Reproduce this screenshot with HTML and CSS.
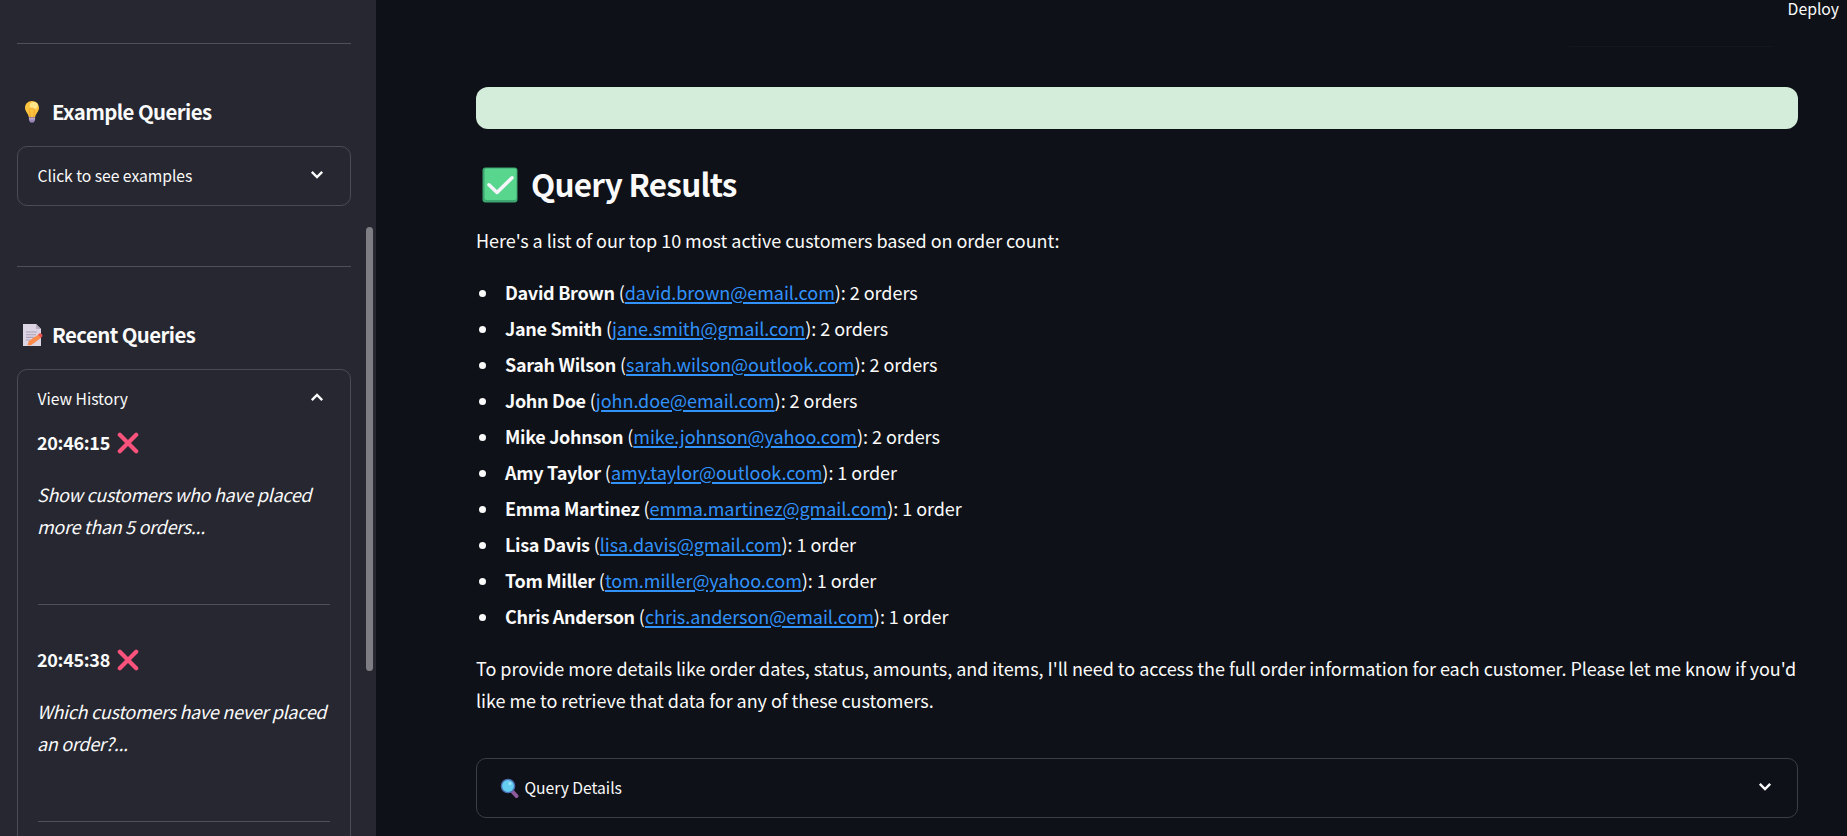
FILE: index.html
```html
<!DOCTYPE html>
<html lang="en">
<head>
<meta charset="utf-8">
<title>Query Results</title>
<link rel="stylesheet" href="styles.css">
</head>
<body>
<div class="app">
  <aside class="sidebar">
    <hr class="rule">
    <h3 class="side-title">
      <svg class="emoji" width="24" height="24" viewBox="0 0 24 24"><path d="M12 1C7.800 1 5 4 5 8c0 3.400 3.400 5.500 3.900 9.500h6.200C15.600 13.500 19 11.400 19 8c0-4-2.800-7-7-7z" fill="#fcc33e"/><ellipse cx="13.800" cy="5.500" rx="4" ry="3.600" fill="#ffe58a"/><path d="M10.500 17l-1-6.500c-.5-3 5.500-3 5 0l-1 6.500" fill="none" stroke="#f3a52d" stroke-width="1"/><path d="M8.900 17.200h6.200v2.800l-1.400 2.600h-3.400L8.900 20z" fill="#9b86b4"/><path d="M9 18.800h6" stroke="#cbbad9" stroke-width="1"/></svg>
      <span>Example Queries</span>
    </h3>
    <section class="expander">
      <div class="summary"><span class="label">Click to see examples</span><svg class="chevron" width="14" height="10" viewBox="0 0 14 10"><path d="M1.800 1.800L7 7l5.200-5.200"/></svg></div>
    </section>
    <hr class="rule second">
    <h3 class="side-title">
      <svg class="emoji" width="24" height="24" viewBox="0 0 24 24"><path d="M3 1h13l5 5v17H3z" fill="#ded5e4"/><path d="M16 1v5h5z" fill="#b9adc4"/><path d="M6 9h11M6 11.700h10M6 14.400h8M6 17h4" stroke="#aaa0b5" stroke-width="1.100"/><path d="M7.500 22.500l1.300-4.500 9.500-6.500 2.600 3.400-9.500 7.100z" fill="#fb8b4b"/><path d="M18 11.600l1.600-1.300c1.300-.8 3.700 2 2.600 3.200l-1.600 1.400z" fill="#ef5350"/></svg>
      <span>Recent Queries</span>
    </h3>
    <section class="expander open">
      <div class="summary"><span class="label">View History</span><svg class="chevron" width="14" height="10" viewBox="0 0 14 10"><path d="M1.800 7.200L7 2l5.200 5.200"/></svg></div>
      <div class="entry">
        <p class="time"><b>20:46:15</b><svg width="22" height="22" viewBox="0 0 22 22"><path d="M2.800 2.800l16.400 16.400M19.200 2.800L2.800 19.200" stroke="#f9527c" stroke-width="4.200" stroke-linecap="round"/></svg></p>
        <p class="query"><em>Show customers who have placed<br>more than 5 orders...</em></p>
        <hr class="rule">
      </div>
      <div class="entry">
        <p class="time"><b>20:45:38</b><svg width="22" height="22" viewBox="0 0 22 22"><path d="M2.800 2.800l16.400 16.400M19.200 2.800L2.800 19.200" stroke="#f9527c" stroke-width="4.200" stroke-linecap="round"/></svg></p>
        <p class="query"><em>Which customers have never placed<br>an order?...</em></p>
        <hr class="rule">
      </div>
    </section>
    <div class="scroll-thumb"></div>
  </aside>
  <main class="main">
    <header class="toolbar"><span>Deploy</span></header>
    <div class="faint-rule"></div>
    <div class="success-bar"></div>
    <h2 class="title">
      <svg width="36" height="36" viewBox="0 0 36 36"><rect x=".5" y=".5" width="35" height="35" rx="3" fill="#3da671"/><rect x="2.500" y="1.500" width="32" height="31.500" rx="2" fill="#58d68d"/><path d="M7 17.800l8 7.700L30 10.800" fill="none" stroke="#f7f5fb" stroke-width="3.500" stroke-linecap="round" stroke-linejoin="round"/></svg>
      <span>Query Results</span>
    </h2>
    <p class="intro">Here's a list of our top 10 most active customers based on order count:</p>
    <ul class="customers">
      <li><b>David Brown</b> (<a>david.brown@email.com</a>): 2 orders</li>
      <li><b>Jane Smith</b> (<a>jane.smith@gmail.com</a>): 2 orders</li>
      <li><b>Sarah Wilson</b> (<a>sarah.wilson@outlook.com</a>): 2 orders</li>
      <li><b>John Doe</b> (<a>john.doe@email.com</a>): 2 orders</li>
      <li><b>Mike Johnson</b> (<a>mike.johnson@yahoo.com</a>): 2 orders</li>
      <li><b>Amy Taylor</b> (<a>amy.taylor@outlook.com</a>): 1 order</li>
      <li><b>Emma Martinez</b> (<a>emma.martinez@gmail.com</a>): 1 order</li>
      <li><b>Lisa Davis</b> (<a>lisa.davis@gmail.com</a>): 1 order</li>
      <li><b>Tom Miller</b> (<a>tom.miller@yahoo.com</a>): 1 order</li>
      <li><b>Chris Anderson</b> (<a>chris.anderson@email.com</a>): 1 order</li>
    </ul>
    <p class="outro">To provide more details like order dates, status, amounts, and items, I'll need to access the full order information for each customer. Please let me know if you'd<br>like me to retrieve that data for any of these customers.</p>
    <section class="expander details">
      <div class="summary"><svg class="lens" width="19" height="20" viewBox="0 0 19 20"><path d="M11.500 12.500l5 5.500" stroke="#8e5a9b" stroke-width="4" stroke-linecap="round"/><circle cx="8" cy="8" r="6.600" fill="#65cdf0" stroke="#4a6fb0" stroke-width="1.400"/><circle cx="10" cy="5.500" r="1.500" fill="#a5e6fb"/></svg><span class="label">Query Details</span><svg class="chevron" width="14" height="10" viewBox="0 0 14 10"><path d="M1.800 1.800L7 7l5.200-5.200"/></svg></div>
    </section>
  </main>
</div>
</body>
</html>
```
FILE: styles.css
```css
* { box-sizing: border-box; }
html, body { margin: 0; height: 836px; overflow: hidden; }
body {
  background: #0e1117;
  color: #fafafa;
  font-family: "Noto Sans CJK SC", "Noto Sans", sans-serif;
  font-size: 18px;
  line-height: 32px;
  letter-spacing: -0.04px;
  white-space: nowrap;
}
h2, h3, p, ul { margin: 0; padding: 0; }
b { letter-spacing: -0.31px; }
.app { display: flex; height: 836px; }

.sidebar {
  position: relative;
  width: 376px;
  flex: none;
  height: 836px;
  overflow: hidden;
  padding: 43px 25px 0 17px;
  background: #262730;
}
.rule { height: 1px; margin: 0; border: 0; background: #4f5058; }
.side-title {
  display: flex;
  align-items: center;
  gap: 8px;
  height: 30px;
  margin-top: 53px;
  padding-left: 3px;
  font-size: 20.400px;
  font-weight: 700;
  line-height: 30px;
  letter-spacing: -0.58px;
}
.side-title span { margin-bottom: 2px; }
.emoji { flex: none; }
.expander {
  margin-top: 19px;
  border: 1px solid #4a4b53;
  border-radius: 10px;
}
.summary {
  display: flex;
  align-items: center;
  height: 58px;
  padding: 0 26px 0 19.500px;
  font-size: 15.700px;
}
.label { margin-bottom: 1px; }
.chevron { margin-left: auto; margin-bottom: 2px; }
.chevron path { fill: none; stroke: #fafafa; stroke-width: 2.400; }
.rule.second { margin-top: 60px; }
.open { height: 500px; }
.entry { padding: 0 20px; }
.entry + .entry { margin-top: 40px; }
.time { display: flex; align-items: center; gap: 7px; height: 32px; }
.time b { margin: 0 0 4px -1px; }
.time svg { margin-bottom: 2px; }
.query { margin: 18px 0 62px -1px; letter-spacing: -0.31px; }

.scroll-thumb {
  position: absolute;
  left: 366px;
  top: 227px;
  width: 7px;
  height: 444px;
  border-radius: 4px;
  background: #7d7d83;
}

.main { flex: 1; min-width: 0; padding: 0 49px 0 100px; }
.toolbar {
  height: 46px;
  margin-right: -41px;
  font-size: 15.800px;
  line-height: 17px;
  text-align: right;
}
.faint-rule { width: 204px; height: 1px; margin-left: auto; margin-right: 25px; background: #14171d; }
.success-bar { height: 42px; margin-top: 40px; border-radius: 12px; background: #d4edda; }
.title {
  display: flex;
  align-items: center;
  gap: 13px;
  height: 44px;
  margin-top: 34px;
  padding-left: 6px;
  font-size: 31.500px;
  font-weight: 700;
  line-height: 44px;
  letter-spacing: -0.76px;
}
.title span { margin-bottom: 4px; }
.intro { margin-top: 17px; }
.customers { margin-top: 18px; list-style: none; }
.customers li { display: flex; align-items: center; white-space: pre; height: 36px; }
.customers li::before { content: ""; flex: none; width: 7px; height: 7px; margin: 2px 19px 0 3px; border-radius: 50%; background: #fafafa; }
.customers a { color: #3192fb; text-decoration: underline; text-decoration-thickness: 2px; text-underline-offset: 2px; }
.outro { margin-top: 18px; }
.details { margin-top: 42px; border-color: #3c3e43; }
.details .summary { padding: 0 25.500px 0 22.500px; }
.lens { margin-right: 6px; }
```
